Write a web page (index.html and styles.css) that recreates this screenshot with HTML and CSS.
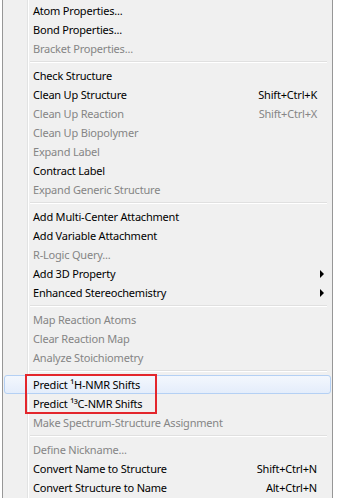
FILE: index.html
```html
<!DOCTYPE html>
<html lang="en">
<head>
    <meta charset="UTF-8">
    <title>Structure menu</title>
    <link rel="stylesheet" href="styles.css">
</head>
<body>
    <div class="menu">
        <div class="item">Atom Properties...</div>
        <div class="item">Bond Properties...</div>
        <div class="item off">Bracket Properties...</div>
        <div class="sep"></div>
        <div class="item">Check Structure</div>
        <div class="item">Clean Up Structure <span class="key">Shift+Ctrl+K</span></div>
        <div class="item off">Clean Up Reaction <span class="key">Shift+Ctrl+X</span></div>
        <div class="item off">Clean Up Biopolymer</div>
        <div class="item off">Expand Label</div>
        <div class="item">Contract Label</div>
        <div class="item off">Expand Generic Structure</div>
        <div class="sep"></div>
        <div class="item">Add Multi-Center Attachment</div>
        <div class="item">Add Variable Attachment</div>
        <div class="item off">R-Logic Query...</div>
        <div class="item">Add 3D Property <span class="arrow"></span></div>
        <div class="item">Enhanced Stereochemistry <span class="arrow"></span></div>
        <div class="sep"></div>
        <div class="item off">Map Reaction Atoms</div>
        <div class="item off">Clear Reaction Map</div>
        <div class="item off">Analyze Stoichiometry</div>
        <div class="sep"></div>
        <div class="group">
            <div class="item hover">Predict ¹H-NMR Shifts</div>
            <div class="item">Predict ¹³C-NMR Shifts</div>
            <div class="mark"></div>
        </div>
        <div class="item off">Make Spectrum-Structure Assignment</div>
        <div class="sep"></div>
        <div class="item off">Define Nickname...</div>
        <div class="item">Convert Name to Structure <span class="key">Shift+Ctrl+N</span></div>
        <div class="item">Convert Structure to Name <span class="key">Alt+Ctrl+N</span></div>
    </div>
</body>
</html>
```

FILE: styles.css
```css
body {
    margin: 0;
    background: #fff;
    font-family: "Noto Sans", "Open Sans", sans-serif;
    font-size: 11px;
    letter-spacing: -0.2px;
    color: #000;
}
.menu {
    margin-left: 2px;
    width: 331px;
    height: 498px;
    padding-top: 1px;
    box-sizing: border-box;
    border-left: 1px solid #979797;
    border-right: 1px solid #979797;
    background:
        linear-gradient(to right, transparent 24px, #e2e3e3 24px, #e2e3e3 25px, #fff 25px, #fff 26px, transparent 26px),
        #f0f0f0;
    overflow: hidden;
}
.item {
    display: flex;
    align-items: center;
    justify-content: space-between;
    height: 19px;
    padding: 0 15px 0 30px;
    white-space: nowrap;
}
.off {
    color: #858585;
}
.arrow {
    width: 0;
    height: 0;
    margin-right: -7px;
    border-top: 4px solid transparent;
    border-bottom: 4px solid transparent;
    border-left: 4px solid #000;
}
.sep {
    height: 8px;
    margin: 0 5px 0 27px;
    background: linear-gradient(#f0f0f0 3px, #e0e0e0 3px, #e0e0e0 4px, #fff 4px, #fff 5px, #f0f0f0 5px);
}
.group {
    position: relative;
}
.hover {
    margin: 0 1px;
    padding-left: 28px;
    border: 1px solid #b4d0f4;
    border-radius: 3px;
    height: 17px;
    background: linear-gradient(#f3f7fd, #e4edfb);
}
.mark {
    position: absolute;
    left: 22px;
    top: -1px;
    width: 128px;
    height: 36px;
    border: 2px solid #e3262c;
}
```
